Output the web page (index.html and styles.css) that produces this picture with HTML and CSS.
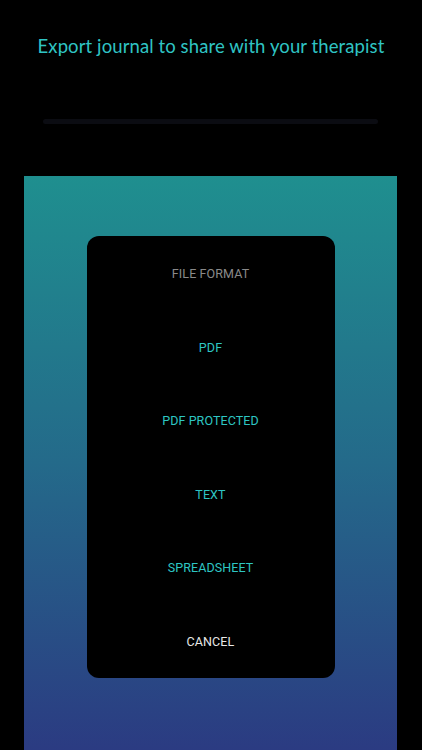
FILE: index.html
```html
<!DOCTYPE html>
<html>
<head>
<meta charset="utf-8">
<link rel="stylesheet" href="styles.css">
</head>
<body>
<div class="screen">
  <h1 class="title">Export journal to share with your therapist</h1>
  <div class="track"></div>
  <div class="panel">
    <div class="sheet">
      <div class="row heading">FILE FORMAT</div>
      <div class="row option">PDF</div>
      <div class="row option">PDF PROTECTED</div>
      <div class="row option">TEXT</div>
      <div class="row option">SPREADSHEET</div>
      <div class="row cancel">CANCEL</div>
    </div>
  </div>
</div>
</body>
</html>
```
FILE: styles.css
```css
html, body {
  margin: 0;
  padding: 0;
  background: #000;
}
.screen {
  width: 422px;
  height: 750px;
  overflow: hidden;
  background: #000;
  display: flex;
  flex-direction: column;
}
.title {
  margin: 34px 0 0;
  font-family: Lato, "Open Sans", sans-serif;
  font-weight: 400;
  font-size: 18.5px;
  line-height: 24px;
  color: #2fc4c4;
  text-align: center;
  letter-spacing: 0.1px;
}
.track {
  margin: 61px 44px 0 43px;
  height: 5px;
  border-radius: 3px;
  background: #0b0c12;
}
.panel {
  margin: 52px 25px 0 24px;
  flex: 1;
  background: linear-gradient(to bottom, #1f8f8f 0%, #246a8a 50%, #2b3b82 100%);
  padding-top: 60px;
  display: flex;
  justify-content: center;
  align-items: flex-start;
}
.sheet {
  width: 248px;
  height: 442px;
  background: #000;
  border-radius: 12px;
  display: flex;
  flex-direction: column;
  padding-top: 1px;
  box-sizing: border-box;
}
.row {
  height: 73.6px;
  display: flex;
  align-items: center;
  justify-content: center;
  font-family: Roboto, "Noto Sans", sans-serif;
  font-size: 12.5px;
  letter-spacing: 0.1px;
}
.heading { color: #8a8a8a; }
.option { color: #2ec6c4; }
.cancel { color: #e8e8e8; }
```
